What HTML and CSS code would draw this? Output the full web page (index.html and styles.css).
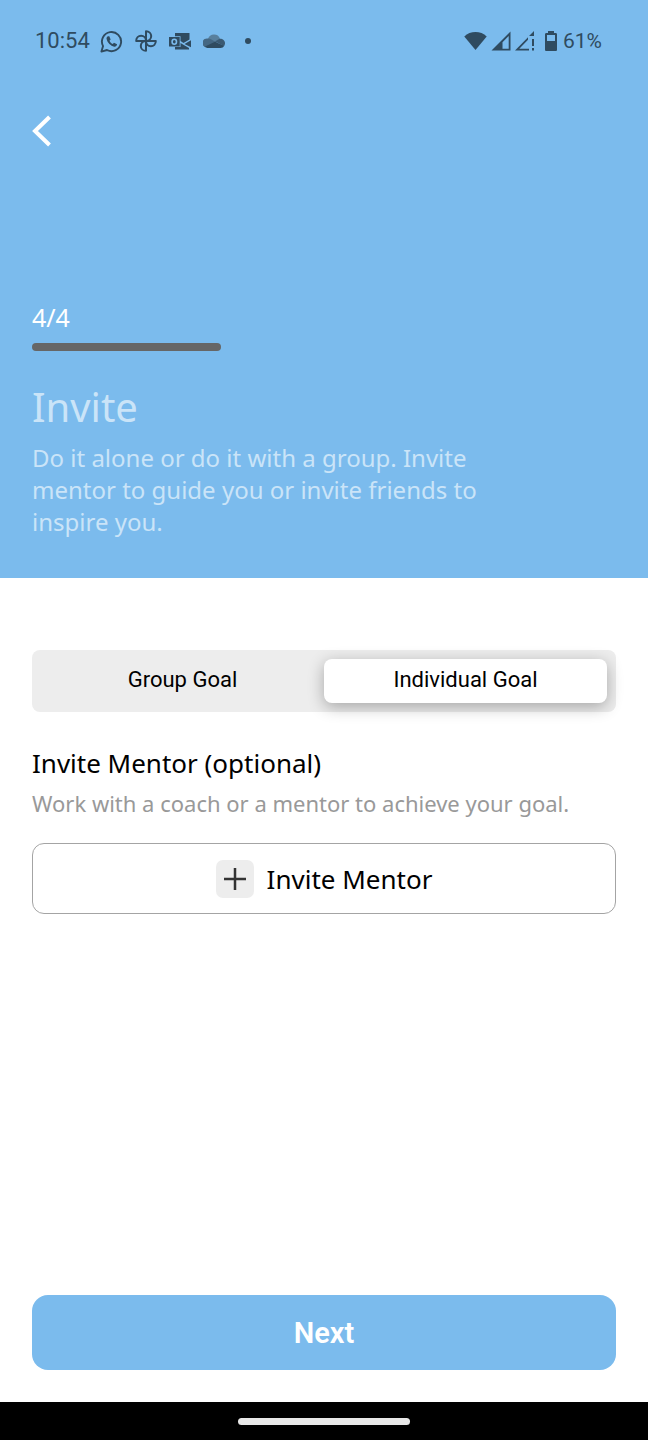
FILE: index.html
```html
<!DOCTYPE html>
<html lang="en">
<head>
<meta charset="utf-8">
<meta name="viewport" content="width=device-width, initial-scale=1">
<title>Invite</title>
<link rel="stylesheet" href="styles.css">
</head>
<body>
<div class="screen">
  <header class="hero">
    <div class="status">
      <div class="status-group status-left">
        <span class="clock">10:54</span>
        <svg class="icon" width="23" height="23" viewBox="0 0 24 24" fill="none" stroke="currentColor" stroke-width="2">
          <path d="M1.500 22.500l1.700-5.700A10 10 0 1 1 7.300 20.900z" stroke-linejoin="round"/>
          <path d="M8.300 6.400c-1.200.7-1.700 1.700-1.400 3 .8 3.800 4.100 7.200 8 8 1.500.2 2.700-.8 2.900-2.500l-3.200-1.600-1.300 1.400c-1.600-.8-2.700-1.900-3.400-3.400l1.200-1.500-1.400-3.300z" fill="currentColor" stroke="none"/>
        </svg>
        <svg class="icon" width="22" height="22" viewBox="0 0 22 22" fill="none" stroke="currentColor" stroke-width="2" stroke-linejoin="round">
          <path d="M11 11V1.200c3 0 5.200 2.200 5.200 4.900S14 11 11 11z"/>
          <path d="M11 11h9.800c0 3-2.200 5.200-4.900 5.200S11 14 11 11z"/>
          <path d="M11 11v9.800c-3 0-5.200-2.200-5.200-4.900S8 11 11 11z"/>
          <path d="M11 11H1.200c0-3 2.200-5.200 4.900-5.200S11 8 11 11z"/>
        </svg>
        <svg class="icon" width="22" height="18" viewBox="0 0 22 18" fill="currentColor">
          <path d="M6 1h14.500v6.500L14.500 11 11.500 9V4.300H6z"/>
          <path d="M22 8.300v7L15.500 12zM6 15h5.500v-4l2.500 1.500 6 3.500v1.500H6z"/>
          <path fill-rule="evenodd" d="M0 5h10.700v9.500H0zM5.300 6.500a3 3.300 0 1 0 0 6.600 3 3.300 0 0 0 0-6.600zm0 1.600a1.400 1.700 0 1 1 0 3.400 1.400 1.700 0 0 1 0-3.400z"/>
        </svg>
        <svg class="icon cloud" width="22" height="14" viewBox="0 0 22 14">
          <path class="cloud-top" d="M5 5a6.300 6.300 0 0 1 12-.2L11 9z"/>
          <path class="cloud-left" d="M5 4.500a5 5 0 0 1 3 .8l6 3.500L3 13.500A4.600 4.600 0 0 1 5 4.500z"/>
          <path class="cloud-right" d="M12 7.500l4-2.600c3-.7 6 1.300 6 4.300 0 1.200-.4 2-1 2.800z"/>
          <path d="M2 12.500l10-4.700 9.200 4c-.8 1.400-2 2.200-3.700 2.200H5c-1.200 0-2.200-.6-3-1.500z" fill="currentColor"/>
        </svg>
        <span class="dot"></span>
      </div>
      <div class="status-group status-right">
        <svg class="icon" width="23" height="20" viewBox="0 0 24 20" fill="currentColor"><path d="M.3 5.300C6.500-.8 17.500-.8 23.700 5.300L12 19.500z"/></svg>
        <svg class="icon" width="20" height="20" viewBox="0 0 20 20" fill="currentColor"><path fill-rule="evenodd" d="M19.500.5v19H.5zM17.700 5L11.500 11.200v6.500h6.200z"/></svg>
        <svg class="icon" width="20" height="20" viewBox="0 0 20 20" fill="currentColor"><path fill-rule="evenodd" d="M0 19.500L13 6.200v2.600L4.300 17.700H14v1.800zM14 5l5-5v5zM17 8h2v7h-2zM17 17h2v2.500h-2z"/></svg>
        <svg class="icon battery" width="12" height="20" viewBox="1 0 12 20" fill="currentColor"><path fill-rule="evenodd" d="M4 0h6v2h1.500C12.500 2 13 2.500 13 3.500v15c0 1-.5 1.500-1.500 1.500h-9C1.500 20 1 19.500 1 18.500v-15C1 2.500 1.500 2 2.500 2H4zM3 4v6h8V4z"/></svg>
        <span class="charge">61%</span>
      </div>
    </div>
    <button class="back" type="button" aria-label="Back">
      <svg width="20" height="32" viewBox="0 0 20 32" fill="none" stroke="currentColor" stroke-width="4"><path d="M17.500 2L3 16l14.500 14"/></svg>
    </button>
    <div class="intro">
      <div class="step">4/4</div>
      <div class="progress" role="progressbar" aria-label="Step 4 of 4" aria-valuemin="0" aria-valuemax="4" aria-valuenow="4"></div>
      <h1 class="title">Invite</h1>
      <p class="lead">Do it alone or do it with a group. Invite mentor to guide you or invite friends to inspire you.</p>
    </div>
  </header>
  <main class="content">
    <div class="tabs">
      <button class="tab" type="button" aria-pressed="false">Group Goal</button>
      <button class="tab tab-active" type="button" aria-pressed="true">Individual Goal</button>
    </div>
    <h2 class="subtitle">Invite Mentor (optional)</h2>
    <p class="hint">Work with a coach or a mentor to achieve your goal.</p>
    <button class="invite" type="button">
      <span class="plus"><svg width="22" height="22" viewBox="0 0 22 22" fill="none" stroke="currentColor" stroke-width="2.500"><path d="M11 0v22M0 11h22"/></svg></span>
      <span>Invite Mentor</span>
    </button>
    <button class="next" type="button">Next</button>
  </main>
  <footer class="navbar"><span class="handle"></span></footer>
</div>
</body>
</html>
```
FILE: styles.css
```css
* { box-sizing: border-box; }

body {
  margin: 0;
  background: #fff;
  color: #000;
  font-family: "Noto Sans", "Open Sans", sans-serif;
}

button {
  border: 0;
  padding: 0;
  color: inherit;
  font: inherit;
  cursor: pointer;
}

svg { display: block; flex: none; }

.screen {
  display: flex;
  flex-direction: column;
  min-height: 100vh;
}

.hero {
  padding: 24px 32px 40px;
  background: #7bbbed;
  color: #fff;
}

.status {
  display: flex;
  align-items: center;
  justify-content: space-between;
  height: 34px;
  padding: 0 14px 0 3px;
  color: #2f4b60;
  font-family: Roboto, sans-serif;
  font-size: 22px;
  line-height: 32px;
}

.status-group { display: flex; align-items: center; }
.status-left { gap: 12px; }
.status-right { gap: 4px; }
.clock { margin-right: -2px; }
.charge { font-size: 21px; }
.battery { margin: 0 2px 0 6px; }

.cloud-top { fill: #587f9d; }
.cloud-left { fill: #446783; }
.cloud-right { fill: #3b5a73; }

.dot {
  width: 6px;
  height: 6px;
  margin-left: 8px;
  border-radius: 50%;
  background: currentColor;
}

.back {
  display: block;
  margin-top: 57px;
  background: none;
}

.step {
  margin-top: 152px;
  font-size: 25px;
  line-height: 36px;
}

.progress {
  width: 189px;
  height: 8px;
  margin-top: 8px;
  border-radius: 4px;
  background: #666;
}

.title {
  margin: 28px 0 0;
  color: #cae4f8;
  font-size: 40px;
  font-weight: 400;
  line-height: 56px;
}

.lead {
  max-width: 480px;
  margin: 7px 0 0;
  color: #cae4f8;
  font-size: 24px;
  line-height: 32px;
}

.content {
  display: flex;
  flex: 1;
  flex-direction: column;
  padding: 72px 32px 32px;
}

.tabs {
  display: grid;
  grid-template-columns: 1fr 1fr;
  padding: 9px;
  border-radius: 8px;
  background: #ededed;
}

.tab {
  height: 44px;
  padding-bottom: 3px;
  border-radius: 8px;
  background: none;
  font-family: Roboto, sans-serif;
  font-size: 22px;
}

.tab-active {
  background: #fff;
  box-shadow: 0 4px 16px rgba(0, 0, 0, 0.3);
}

.subtitle {
  margin: 33px 0 0;
  font-size: 26px;
  font-weight: 400;
  line-height: 36px;
}

.hint {
  margin: 6px 0 0;
  color: #999;
  font-size: 22px;
  line-height: 32px;
}

.invite {
  display: flex;
  align-items: center;
  justify-content: center;
  gap: 13px;
  height: 71px;
  margin-top: 24px;
  border: 1px solid #a4a4a4;
  border-radius: 12px;
  background: #fff;
  font-size: 26px;
}

.plus {
  display: grid;
  place-items: center;
  width: 38px;
  height: 38px;
  border-radius: 7px;
  background: #ededed;
  color: #333;
}

.next {
  height: 75px;
  margin-top: auto;
  border-radius: 16px;
  background: #7bbbed;
  color: #fff;
  font-family: Roboto, sans-serif;
  font-size: 29px;
  font-weight: 600;
}

.navbar {
  display: flex;
  align-items: center;
  justify-content: center;
  height: 38px;
  background: #000;
}

.handle {
  width: 172px;
  height: 7px;
  border-radius: 4px;
  background: #e8e8e8;
}
```
